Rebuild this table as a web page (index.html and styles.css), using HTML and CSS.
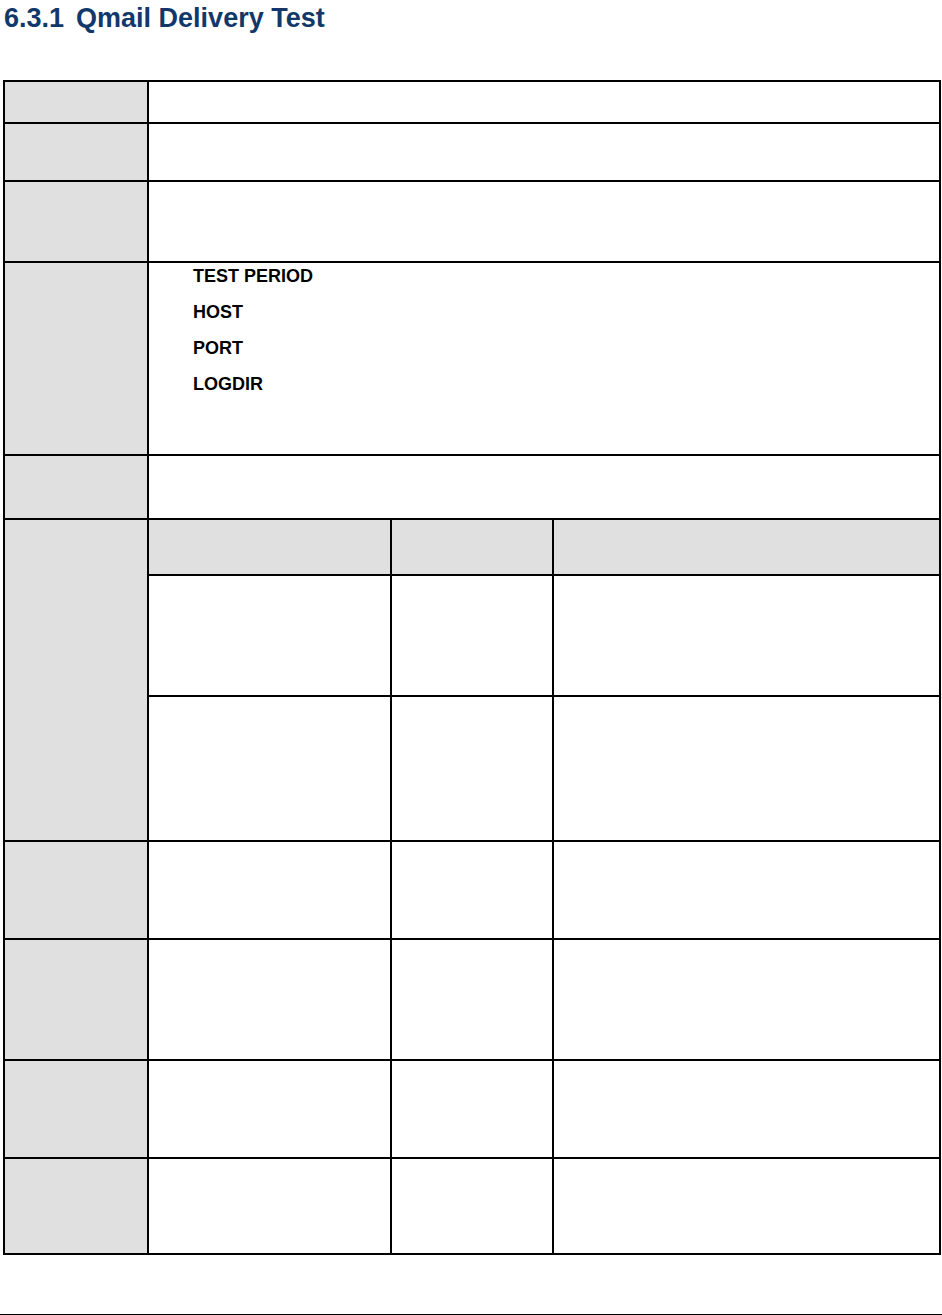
FILE: index.html
```html
<!DOCTYPE html>
<html>
<head>
<meta charset="utf-8">
<link rel="stylesheet" href="styles.css">
</head>
<body>
<h1 class="title"><span class="num">6.3.1</span>Qmail Delivery Test</h1>
<table class="spec">
  <colgroup>
    <col class="c1"><col class="c2"><col class="c3"><col class="c4">
  </colgroup>
  <tr class="r1"><td class="lab"></td><td colspan="3"></td></tr>
  <tr class="r2"><td class="lab"></td><td colspan="3"></td></tr>
  <tr class="r3"><td class="lab"></td><td colspan="3"></td></tr>
  <tr class="r4"><td class="lab"></td><td colspan="3" class="params">
    <ul class="plist">
      <li>TEST PERIOD</li>
      <li>HOST</li>
      <li>PORT</li>
      <li>LOGDIR</li>
    </ul>
  </td></tr>
  <tr class="r5"><td class="lab"></td><td colspan="3"></td></tr>
  <tr class="r6"><td class="lab" rowspan="3"></td><td class="hd"></td><td class="hd"></td><td class="hd"></td></tr>
  <tr class="r7"><td></td><td></td><td></td></tr>
  <tr class="r8"><td></td><td></td><td></td></tr>
  <tr class="r9"><td class="lab"></td><td></td><td></td><td></td></tr>
  <tr class="r10"><td class="lab"></td><td></td><td></td><td></td></tr>
  <tr class="r11"><td class="lab"></td><td></td><td></td><td></td></tr>
  <tr class="r12"><td class="lab"></td><td></td><td></td><td></td></tr>
</table>
<div class="footer-rule"></div>
</body>
</html>
```
FILE: styles.css
```css
html, body {
  margin: 0;
  padding: 0;
  background: #ffffff;
}
body {
  font-family: "Liberation Sans", Arial, sans-serif;
  color: #000;
  width: 942px;
  height: 1315px;
  overflow: hidden;
}
.title {
  margin: 3px 0 0 4px;
  font-size: 27px;
  line-height: 30px;
  font-weight: bold;
  color: #12386a;
  height: 30px;
}
.title .num {
  margin-right: 12px;
}
.spec {
  margin: 47px 0 0 3px;
  border-collapse: collapse;
  table-layout: fixed;
  width: 936px;
}
.spec td {
  border: 2px solid #000;
  padding: 0;
  vertical-align: top;
  background: #fff;
}
.spec td.lab,
.spec td.hd {
  background: #e0e0e0;
}
.c1 { width: 144px; }
.c2 { width: 243px; }
.c3 { width: 162px; }
.c4 { width: 387px; }
.r1 { height: 42px; }
.r2 { height: 58px; }
.r3 { height: 81px; }
.r4 { height: 193px; }
.r5 { height: 64px; }
.r6 { height: 56px; }
.r7 { height: 121px; }
.r8 { height: 145px; }
.r9 { height: 98px; }
.r10 { height: 121px; }
.r11 { height: 98px; }
.r12 { height: 96px; }
.plist {
  list-style: none;
  margin: 0;
  padding: 2px 0 0 44px;
}
.plist li {
  font-size: 18px;
  font-weight: bold;
  line-height: 22px;
  margin-bottom: 14px;
}
.footer-rule {
  margin-top: 59px;
  border-top: 2px solid #000;
  width: 942px;
}
```
